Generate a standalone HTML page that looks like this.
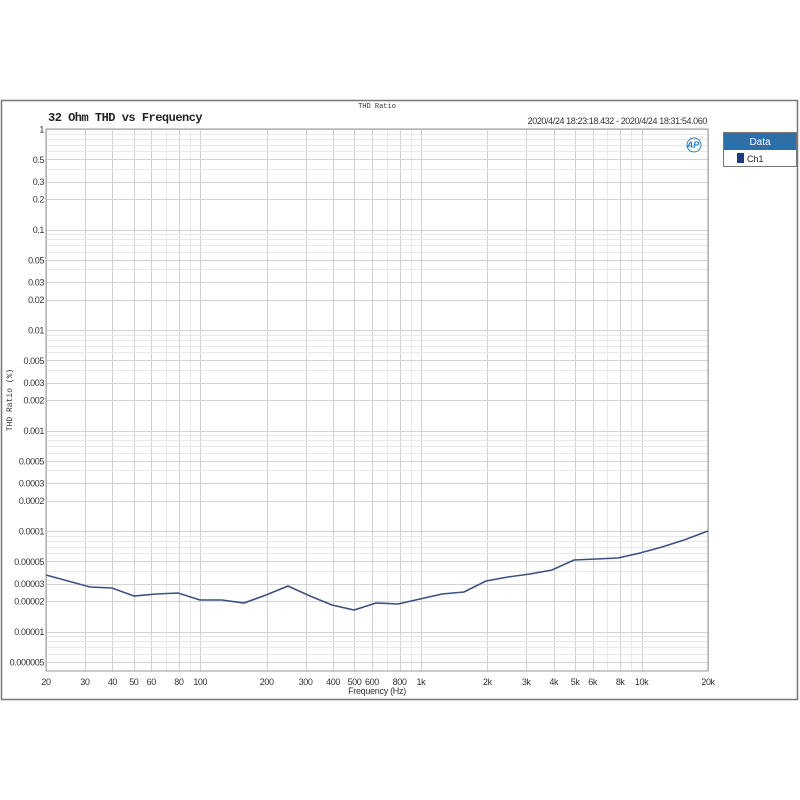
<!DOCTYPE html>
<html><head><meta charset="utf-8"><style>
html,body{margin:0;padding:0;background:#fff;}
body{width:800px;height:800px;overflow:hidden;position:relative;font-family:"Liberation Sans",sans-serif;}
</style></head><body>
<svg id="s" width="800" height="800" xmlns="http://www.w3.org/2000/svg" style="position:absolute;left:0;top:0">
<rect x="1.5" y="100.5" width="796" height="599" fill="#fff" stroke="#777" stroke-width="1.5"/>
<text x="377" y="108" font-size="7" font-family="Liberation Mono,monospace" fill="#333" text-anchor="middle">THD Ratio</text>
<text x="48" y="121" font-size="12" font-family="Liberation Mono,monospace" font-weight="bold" fill="#222" letter-spacing="-0.5">32 Ohm THD vs Frequency</text>
<text x="707" y="124" font-size="9" fill="#333" text-anchor="end" letter-spacing="-0.4">2020/4/24 18:23:18.432 - 2020/4/24 18:31:54.060</text>
<g id="grid"></g>
<rect x="46" y="129" width="662" height="542" fill="none" stroke="#999" stroke-width="1"/>
<polyline fill="none" stroke="#3a5080" stroke-width="1.6" points="46,575 90,587 112,588 134,596 156,594 178,593 200,600 222,600 244,603 266,595 288,586 310,596 332,605 354,610 376,603 398,604 420,599 442,594 464,592 486,581 508,577 530,574 552,570 574,560 596,559 618,558 640,553 662,547 684,540 708,531"/>
<g id="lab" font-size="9" fill="#333" letter-spacing="-0.4"></g>
<text x="377" y="694" font-size="9" fill="#333" text-anchor="middle" letter-spacing="-0.3">Frequency (Hz)</text>
<text transform="translate(12,400) rotate(-90)" font-size="8" font-family="Liberation Mono,monospace" fill="#333" text-anchor="middle">THD Ratio (%)</text>
<text x="693" y="148" font-size="9" font-style="italic" font-weight="bold" fill="#2f7fc0" text-anchor="middle">AP</text>
<circle cx="694" cy="145" r="7" fill="none" stroke="#2f7fc0" stroke-width="1"/>
<rect x="723.5" y="132.5" width="73" height="34" fill="#fff" stroke="#777"/>
<rect x="724" y="133" width="72" height="17" fill="#2f6fa8"/>
<text x="760" y="145" font-size="10" fill="#fff" text-anchor="middle">Data</text>
<rect x="737" y="153" width="7" height="10" fill="#1f3a80"/>
<text x="747" y="162" font-size="9" fill="#222">Ch1</text>
</svg>
<script>
var ns="http://www.w3.org/2000/svg",g=document.getElementById("grid"),lab=document.getElementById("lab");
function ln(x1,y1,x2,y2,c){var l=document.createElementNS(ns,"line");l.setAttribute("x1",x1);l.setAttribute("y1",y1);l.setAttribute("x2",x2);l.setAttribute("y2",y2);l.setAttribute("stroke",c);l.setAttribute("stroke-width","1");g.appendChild(l);}
function tx(x,y,s,a){var t=document.createElementNS(ns,"text");t.setAttribute("x",x);t.setAttribute("y",y);t.setAttribute("text-anchor",a);t.textContent=s;lab.appendChild(t);}
var X=function(f){return 46+220.67*Math.log10(f/20);};
var xl={20:"20",30:"30",40:"40",50:"50",60:"60",80:"80",100:"100",200:"200",300:"300",400:"400",500:"500",600:"600",800:"800",1000:"1k",2000:"2k",3000:"3k",4000:"4k",5000:"5k",6000:"6k",8000:"8k",10000:"10k",20000:"20k"};
var fs=[];[10,100,1000,10000].forEach(function(d){for(var k=1;k<=9;k++){var f=k*d;if(f>=20&&f<=20000)fs.push(f);}});
fs.forEach(function(f){var x=Math.round(X(f))+0.5;ln(x,129,x,671,xl[f]?"#d2d2d2":"#e8e8e8");if(xl[f])tx(X(f),685,xl[f],"middle");});
var Y=function(v){return 129-100.5*Math.log10(v);};
var vals=[];for(var d=0;d<=6;d++){for(var k=1;k<=9;k++){var v=k*Math.pow(10,-d);if(v<=1&&Y(v)<=671)vals.push([v,k,d]);}}
vals.forEach(function(a){var v=a[0],k=a[1],d=a[2];var y=Math.round(Y(v))+0.5;var lbl=(k==1||k==2||k==3||k==5);ln(46,y,708,y,lbl?"#d2d2d2":"#e8e8e8");
if(lbl){var s=(k*Math.pow(10,-d)).toFixed(d);if(d==0)s=String(k);tx(44,Y(v)+3.5,s,"end");}});
</script>
</body></html>
